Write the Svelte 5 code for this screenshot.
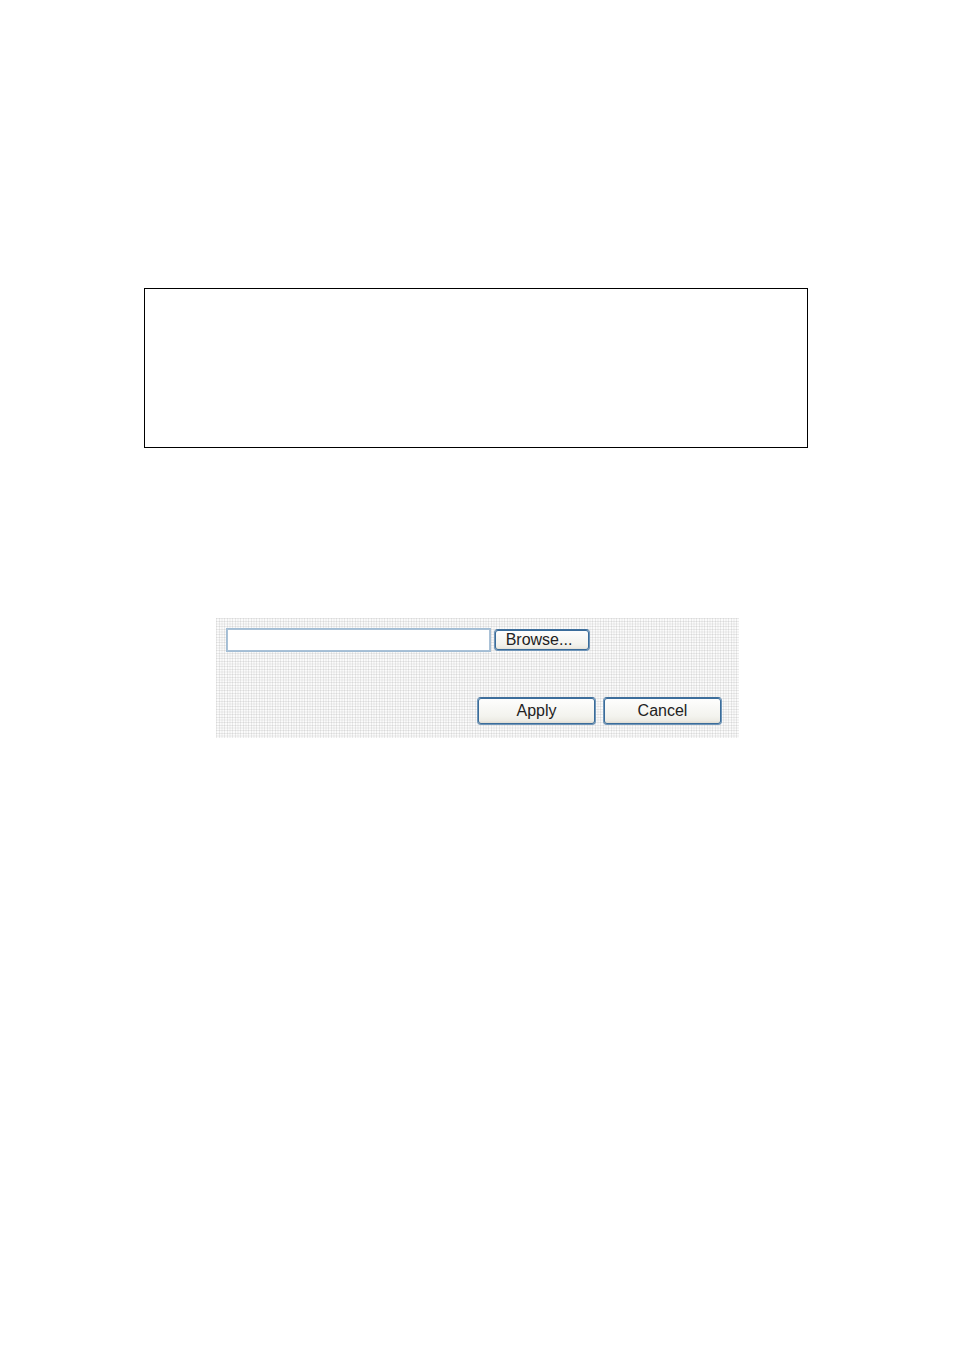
<script>
  let fileName = $state('')
  let picker

  function pickFile() {
    fileName = picker.files[0]?.name ?? ''
  }

  function clearFile() {
    picker.value = ''
    fileName = ''
  }
</script>

<main>
  <section class="note"></section>

  <form class="panel" onsubmit={(e) => e.preventDefault()}>
    <div class="file-row">
      <input class="path" type="text" aria-label="File" bind:value={fileName} />
      <input type="file" hidden bind:this={picker} onchange={pickFile} />
      <button class="browse" type="button" onclick={() => picker.click()}>Browse...</button>
    </div>
    <div class="actions">
      <button type="submit">Apply</button>
      <button type="button" onclick={clearFile}>Cancel</button>
    </div>
  </form>
</main>

<style>
  :global(body) {
    background: #fff;
  }
  main {
    padding: 288px 146px 48px 144px;
    font-family: "Liberation Sans", Arial, sans-serif;
  }
  .note {
    box-sizing: border-box;
    min-height: 160px;
    border: 1px solid #000;
  }
  .panel {
    margin: 170px 69px 0 72px;
    padding: 10px 17px 13px 10px;
    /* woven dots, three threads to every 8px */
    background-color: #fbfbfb;
    background-image:
      linear-gradient(90deg, rgba(0, 0, 0, 0.07) 1px, transparent 1px 3px, rgba(0, 0, 0, 0.07) 3px 4px, transparent 4px 5px, rgba(0, 0, 0, 0.03) 5px 7px, transparent 7px),
      linear-gradient(rgba(0, 0, 0, 0.07) 1px, transparent 1px 3px, rgba(0, 0, 0, 0.07) 3px 4px, transparent 4px 5px, rgba(0, 0, 0, 0.03) 5px 7px, transparent 7px);
    background-size: 8px 8px;
  }
  .file-row {
    display: flex;
    align-items: center;
    gap: 3px;
  }
  .path {
    box-sizing: border-box;
    flex: 0 1 265px;
    min-width: 0;
    height: 24px;
    padding: 0 4px;
    border: 1px solid #a3bdd4;
    box-shadow: inset 0 0 0 1px #a9c1d7;
    background: #fff;
    font: inherit;
    outline: none;
  }
  .actions {
    display: flex;
    justify-content: flex-end;
    gap: 7px;
    margin-top: 45px;
  }
  button {
    box-sizing: border-box;
    width: 119px;
    height: 28px;
    padding: 0 0 1px;
    border: 1px solid #6f95b8;
    border-top-color: #3f6f9c;
    border-radius: 4px;
    box-shadow: inset 0 0 0 1px #3a6c9a;
    background: linear-gradient(#fefefe, #f3f3ee 70%, #ecebe4 88%, #d8d3c7);
    color: #222;
    font-family: inherit;
    font-size: 16px;
    line-height: 20px;
  }
  .browse {
    width: 96px;
    height: 22px;
    padding: 0 6px 0 0;
  }
</style>
